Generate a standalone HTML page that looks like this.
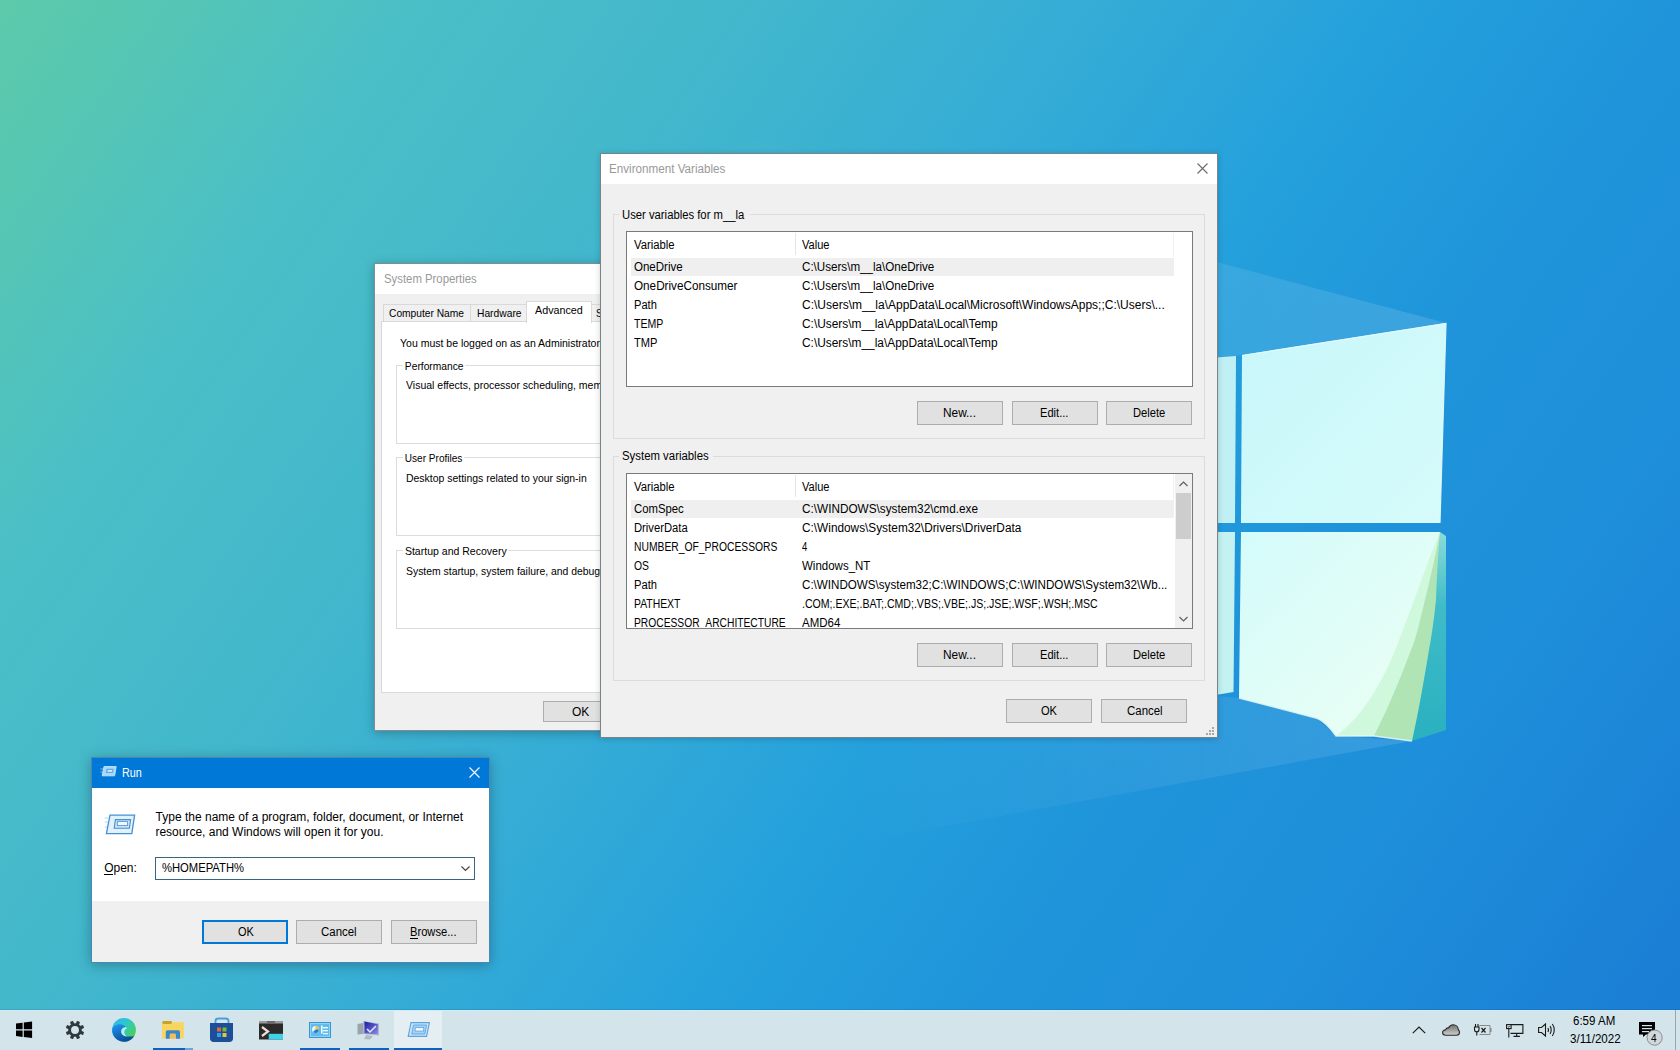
<!DOCTYPE html>
<html><head><meta charset="utf-8">
<style>
*{margin:0;padding:0;box-sizing:border-box}
html,body{width:1680px;height:1050px;overflow:hidden}
body{position:relative;font-family:"Liberation Sans",sans-serif;font-size:12px;color:#000;background:#2a9fd6}
.a{position:absolute}
.t{position:absolute;white-space:nowrap;transform-origin:0 0}
svg{position:absolute;overflow:visible}
</style></head><body>

<svg style="left:0;top:0" width="1680" height="1050" viewBox="0 0 1680 1050">
<defs>
<linearGradient id="bg" x1="0" y1="0" x2="1620.8" y2="1134.6" gradientUnits="userSpaceOnUse">
<stop offset="0" stop-color="#5ccaaa"/>
<stop offset="0.072" stop-color="#55c6b4"/>
<stop offset="0.166" stop-color="#4bbfc6"/>
<stop offset="0.238" stop-color="#47bbc9"/>
<stop offset="0.31" stop-color="#42b7cc"/>
<stop offset="0.455" stop-color="#35acd6"/>
<stop offset="0.58" stop-color="#24a0dc"/>
<stop offset="0.70" stop-color="#1f94da"/>
<stop offset="0.81" stop-color="#1e8fda"/>
<stop offset="1" stop-color="#1a7cd4"/>
</linearGradient>
<radialGradient id="tl" cx="0" cy="0" r="10"><stop offset="0" stop-color="#000" stop-opacity="0"/></radialGradient>
<linearGradient id="b1" x1="1446" y1="323" x2="700" y2="250" gradientUnits="userSpaceOnUse">
<stop offset="0" stop-color="#fff" stop-opacity="0.13"/>
<stop offset="1" stop-color="#fff" stop-opacity="0"/>
</linearGradient>
<linearGradient id="b2" x1="1412" y1="740" x2="850" y2="800" gradientUnits="userSpaceOnUse">
<stop offset="0" stop-color="#fff" stop-opacity="0.11"/>
<stop offset="1" stop-color="#fff" stop-opacity="0"/>
</linearGradient>
</defs>
<rect width="1680" height="1050" fill="url(#bg)"/>
<rect width="1680" height="1050" fill="url(#tl)"/>
<polygon points="1446,323 1242,355 600,456 600,98" fill="url(#b1)"/>
<polygon points="1412,741 1336,736 1316,718 1239,698 1217,696 600,700 600,889" fill="url(#b2)"/>
<!-- panes -->
<defs>
<linearGradient id="p1" x1="1242" y1="330" x2="1440" y2="523" gradientUnits="userSpaceOnUse"><stop offset="0" stop-color="#c8f7fb"/><stop offset="1" stop-color="#d6fbfa"/></linearGradient>
<linearGradient id="p2" x1="1242" y1="532" x2="1420" y2="720" gradientUnits="userSpaceOnUse"><stop offset="0" stop-color="#d4fbfb"/><stop offset="1" stop-color="#eafff4"/></linearGradient>
<linearGradient id="tl2" x1="0" y1="532" x2="0" y2="740" gradientUnits="userSpaceOnUse"><stop offset="0" stop-color="#8adcd8"/><stop offset="0.35" stop-color="#40bcc8"/><stop offset="1" stop-color="#2ab0c0"/></linearGradient>
</defs>
<polygon points="1210,358 1236,356 1235,523 1210,523" fill="#c0f0f4"/>
<polygon points="1242,355 1446,323 1440,523 1241,523" fill="url(#p1)"/>
<path d="M1242,355.5 L1446,323.5 L1440,523" fill="none" stroke="#e6fbfd" stroke-width="1.2" opacity="0.9"/>
<polygon points="1210,532 1235,532 1233.5,692 1210,696" fill="#c4f2f2"/>
<path d="M1440,532 L1446,536 L1446,730 L1412,741 L1405,650 Z" fill="url(#tl2)"/>
<path d="M1440,532 C1439,545 1437,570 1436,600 C1434,620 1431,640 1429,650 C1424,680 1418,715 1412,741 L1374,736 L1390,600 Z" fill="#b0e4b4"/>
<path d="M1440,532 C1438,545 1430,580 1425,600 C1420,620 1416,640 1411,650 C1396,690 1386,712 1374,736 L1336,736 L1380,600 Z" fill="#d0f8dc"/>
<path d="M1241,532 L1440,532 C1428,560 1412,608 1396,648 C1380,688 1360,718 1336,736 C1330,728 1324,721 1316,718 L1239,698 Z" fill="url(#p2)"/>
<path d="M1239,698 L1316,718 C1324,721 1330,728 1336,736 L1374,736 L1412,741" fill="none" stroke="#e8f6fa" stroke-width="1.3" opacity="0.85"/>
</svg>

<div class="a" style="left:0;top:0;width:600px;height:1050px;overflow:hidden"><div class="a" style="left:374px;top:263px;width:247px;height:468px;background:#f0f0f0;border:1px solid rgba(40,60,70,0.55);box-shadow:0 2px 10px rgba(0,0,0,0.25);"></div><div class="a" style="left:375px;top:264px;width:245px;height:30px;background:#fff;"></div><div class="t" style="left:384.0px;top:272px;font-size:12px;line-height:14px;color:#999;transform:scaleX(0.9459);">System Properties</div><div class="a" style="left:383px;top:304px;width:88px;height:18px;background:#f0f0f0;border:1px solid #d9d9d9;"></div><div class="a" style="left:470px;top:304px;width:58px;height:18px;background:#f0f0f0;border:1px solid #d9d9d9;"></div><div class="a" style="left:381px;top:321px;width:240px;height:372px;background:#fff;border:1px solid #d9d9d9;"></div><div class="a" style="left:526px;top:301px;width:66px;height:22px;background:#fff;border:1px solid #d9d9d9;border-bottom:none;"></div><div class="a" style="left:591px;top:304px;width:30px;height:18px;background:#f0f0f0;border:1px solid #d9d9d9;"></div><div class="t" style="left:389.0px;top:307px;font-size:11px;line-height:13px;transform:scaleX(0.9296);">Computer Name</div><div class="t" style="left:477.0px;top:307px;font-size:11px;line-height:13px;transform:scaleX(0.9333);">Hardware</div><div class="t" style="left:535.0px;top:304px;font-size:11px;line-height:13px;transform:scaleX(0.9776);">Advanced</div><div class="t" style="left:596.0px;top:307px;font-size:11px;line-height:13px;transform:scaleX(0.8571);">S</div><div class="t" style="left:400.3px;top:337px;font-size:11px;line-height:13px;transform:scaleX(0.9552);">You must be logged on as an Administrator</div><div class="a" style="left:396px;top:365px;width:245px;height:79px;border:1px solid #dcdcdc;"></div><div class="t" style="left:405.0px;top:360px;font-size:11px;line-height:13px;transform:scaleX(0.9302);background:#fff;padding:0 2px;margin-left:-2px;">Performance</div><div class="t" style="left:406.2px;top:379px;font-size:11px;line-height:13px;transform:scaleX(0.954);">Visual effects, processor scheduling, memory usage</div><div class="a" style="left:396px;top:457px;width:245px;height:79px;border:1px solid #dcdcdc;"></div><div class="t" style="left:405.0px;top:452px;font-size:11px;line-height:13px;transform:scaleX(0.9143);background:#fff;padding:0 2px;margin-left:-2px;">User Profiles</div><div class="t" style="left:406.0px;top:472px;font-size:11px;line-height:13px;transform:scaleX(0.9505);">Desktop settings related to your sign-in</div><div class="a" style="left:396px;top:550px;width:245px;height:79px;border:1px solid #dcdcdc;"></div><div class="t" style="left:405.0px;top:545px;font-size:11px;line-height:13px;transform:scaleX(0.9570);background:#fff;padding:0 2px;margin-left:-2px;">Startup and Recovery</div><div class="t" style="left:406.4px;top:565px;font-size:11px;line-height:13px;transform:scaleX(0.945);">System startup, system failure, and debugging information</div><div class="a" style="left:543px;top:701px;width:98px;height:21px;background:#e1e1e1;border:1px solid #adadad;"></div><div class="t" style="left:572.0px;top:705px;font-size:12px;line-height:14px;">OK</div></div>
<div class="a" style="left:600px;top:153px;width:618px;height:585px;background:#f0f0f0;border:1px solid rgba(40,60,70,0.6);box-shadow:0 1px 6px rgba(0,0,0,0.18);"></div><div class="a" style="left:601px;top:154px;width:616px;height:30px;background:#fff;"></div><div class="t" style="left:609.0px;top:162px;font-size:12px;line-height:14px;color:#999;transform:scaleX(0.9708);">Environment Variables</div><svg style="left:1197px;top:163px" width="11" height="11"><path d="M0.5,0.5 L10.5,10.5 M10.5,0.5 L0.5,10.5" stroke="#6b6b6b" stroke-width="1.1"/></svg><div class="a" style="left:613px;top:214px;width:592px;height:225px;border:1px solid #dcdcdc;"></div><div class="a" style="left:619px;top:206px;width:131px;height:17px;background:#f0f0f0;"></div><div class="t" style="left:622.0px;top:208px;font-size:12px;line-height:14px;transform:scaleX(0.9400);">User variables for m__la</div><div class="a" style="left:626px;top:231px;width:567px;height:156px;background:#fff;border:1px solid #7a7a7a;"></div><div class="a" style="left:1173px;top:233px;width:1px;height:24px;background:#f0f0f0;"></div><div class="a" style="left:795px;top:233px;width:1px;height:22px;background:#e5e5e5;"></div><div class="a" style="left:631px;top:258px;width:543px;height:18px;background:#efefef;"></div><div class="t" style="left:634.0px;top:238px;font-size:12px;line-height:14px;transform:scaleX(0.9419);">Variable</div><div class="t" style="left:802.0px;top:238px;font-size:12px;line-height:14px;transform:scaleX(0.9200);">Value</div><div class="t" style="left:634.0px;top:260px;font-size:12px;line-height:14px;transform:scaleX(0.9588);">OneDrive</div><div class="t" style="left:802.0px;top:260px;font-size:12px;line-height:14px;transform:scaleX(0.9679);">C:\Users\m__la\OneDrive</div><div class="t" style="left:634.0px;top:279px;font-size:12px;line-height:14px;transform:scaleX(0.9755);">OneDriveConsumer</div><div class="t" style="left:802.0px;top:279px;font-size:12px;line-height:14px;transform:scaleX(0.9679);">C:\Users\m__la\OneDrive</div><div class="t" style="left:634.0px;top:298px;font-size:12px;line-height:14px;transform:scaleX(0.9240);">Path</div><div class="t" style="left:802.0px;top:298px;font-size:12px;line-height:14px;">C:\Users\m__la\AppData\Local\Microsoft\WindowsApps;;C:\Users\...</div><div class="t" style="left:634.0px;top:317px;font-size:12px;line-height:14px;transform:scaleX(0.8788);">TEMP</div><div class="t" style="left:802.0px;top:317px;font-size:12px;line-height:14px;transform:scaleX(0.9909);">C:\Users\m__la\AppData\Local\Temp</div><div class="t" style="left:634.0px;top:336px;font-size:12px;line-height:14px;transform:scaleX(0.9240);">TMP</div><div class="t" style="left:802.0px;top:336px;font-size:12px;line-height:14px;transform:scaleX(0.9909);">C:\Users\m__la\AppData\Local\Temp</div><div class="a" style="left:917px;top:401px;width:86px;height:24px;background:#e1e1e1;border:1px solid #adadad;"></div><div class="t" style="left:943.4px;top:406px;font-size:12px;line-height:14px;transform:scaleX(0.9879);">New...</div><div class="a" style="left:1012px;top:401px;width:86px;height:24px;background:#e1e1e1;border:1px solid #adadad;"></div><div class="t" style="left:1040.3px;top:406px;font-size:12px;line-height:14px;transform:scaleX(0.9258);">Edit...</div><div class="a" style="left:1106px;top:401px;width:86px;height:24px;background:#e1e1e1;border:1px solid #adadad;"></div><div class="t" style="left:1132.6px;top:406px;font-size:12px;line-height:14px;transform:scaleX(0.9314);">Delete</div><div class="a" style="left:613px;top:456px;width:592px;height:225px;border:1px solid #dcdcdc;"></div><div class="a" style="left:619px;top:448px;width:94px;height:17px;background:#f0f0f0;"></div><div class="t" style="left:622.0px;top:449px;font-size:12px;line-height:14px;transform:scaleX(0.9484);">System variables</div><div class="a" style="left:626px;top:473px;width:567px;height:156px;background:#fff;border:1px solid #7a7a7a;"></div><div class="a" style="left:627px;top:474px;width:565px;height:154px;overflow:hidden"><div class="a" style="left:-627px;top:-474px;width:1680px;height:1050px"><div class="a" style="left:795px;top:475px;width:1px;height:22px;background:#e5e5e5;"></div><div class="a" style="left:631px;top:500px;width:543px;height:18px;background:#efefef;"></div><div class="a" style="left:1173px;top:475px;width:1px;height:24px;background:#f0f0f0;"></div><div class="t" style="left:634.0px;top:480px;font-size:12px;line-height:14px;transform:scaleX(0.9419);">Variable</div><div class="t" style="left:802.0px;top:480px;font-size:12px;line-height:14px;transform:scaleX(0.9200);">Value</div><div class="t" style="left:634.0px;top:502px;font-size:12px;line-height:14px;transform:scaleX(0.9434);">ComSpec</div><div class="t" style="left:802.0px;top:502px;font-size:12px;line-height:14px;transform:scaleX(0.9811);">C:\WINDOWS\system32\cmd.exe</div><div class="t" style="left:634.0px;top:521px;font-size:12px;line-height:14px;transform:scaleX(0.9362);">DriverData</div><div class="t" style="left:802.0px;top:521px;font-size:12px;line-height:14px;transform:scaleX(0.9848);">C:\Windows\System32\Drivers\DriverData</div><div class="t" style="left:634.0px;top:540px;font-size:12px;line-height:14px;transform:scaleX(0.8605);">NUMBER_OF_PROCESSORS</div><div class="t" style="left:802.0px;top:540px;font-size:12px;line-height:14px;transform:scaleX(0.7857);">4</div><div class="t" style="left:634.0px;top:559px;font-size:12px;line-height:14px;transform:scaleX(0.8647);">OS</div><div class="t" style="left:802.0px;top:559px;font-size:12px;line-height:14px;transform:scaleX(0.9583);">Windows_NT</div><div class="t" style="left:634.0px;top:578px;font-size:12px;line-height:14px;transform:scaleX(0.9320);">Path</div><div class="t" style="left:802.0px;top:578px;font-size:12px;line-height:14px;transform:scaleX(0.9682);">C:\WINDOWS\system32;C:\WINDOWS;C:\WINDOWS\System32\Wb...</div><div class="t" style="left:634.0px;top:597px;font-size:12px;line-height:14px;transform:scaleX(0.8648);">PATHEXT</div><div class="t" style="left:802.0px;top:597px;font-size:12px;line-height:14px;transform:scaleX(0.8804);">.COM;.EXE;.BAT;.CMD;.VBS;.VBE;.JS;.JSE;.WSF;.WSH;.MSC</div><div class="t" style="left:634.0px;top:616px;font-size:12px;line-height:14px;transform:scaleX(0.8554);">PROCESSOR_ARCHITECTURE</div><div class="t" style="left:802.0px;top:616px;font-size:12px;line-height:14px;transform:scaleX(0.9575);">AMD64</div><div class="a" style="left:1175px;top:474px;width:17px;height:154px;background:#f0f0f0;"></div><div class="a" style="left:1176px;top:493px;width:15px;height:46px;background:#cdcdcd;"></div><svg style="left:1176px;top:478px" width="15" height="12"><path d="M3.5,8 L7.5,4 L11.5,8" fill="none" stroke="#606060" stroke-width="1.2"/></svg><svg style="left:1176px;top:613px" width="15" height="12"><path d="M3.5,4 L7.5,8 L11.5,4" fill="none" stroke="#606060" stroke-width="1.2"/></svg></div></div><div class="a" style="left:917px;top:643px;width:86px;height:24px;background:#e1e1e1;border:1px solid #adadad;"></div><div class="t" style="left:943.4px;top:648px;font-size:12px;line-height:14px;transform:scaleX(0.9879);">New...</div><div class="a" style="left:1012px;top:643px;width:86px;height:24px;background:#e1e1e1;border:1px solid #adadad;"></div><div class="t" style="left:1040.3px;top:648px;font-size:12px;line-height:14px;transform:scaleX(0.9258);">Edit...</div><div class="a" style="left:1106px;top:643px;width:86px;height:24px;background:#e1e1e1;border:1px solid #adadad;"></div><div class="t" style="left:1132.6px;top:648px;font-size:12px;line-height:14px;transform:scaleX(0.9314);">Delete</div><div class="a" style="left:1006px;top:699px;width:86px;height:24px;background:#e1e1e1;border:1px solid #adadad;"></div><div class="t" style="left:1041.0px;top:704px;font-size:12px;line-height:14px;transform:scaleX(0.9235);">OK</div><div class="a" style="left:1101px;top:699px;width:86px;height:24px;background:#e1e1e1;border:1px solid #adadad;"></div><div class="t" style="left:1126.7px;top:704px;font-size:12px;line-height:14px;transform:scaleX(0.9541);">Cancel</div><svg style="left:1206px;top:727px" width="9" height="9" fill="#a8a8a8"><rect x="6" y="0" width="2" height="2"/><rect x="3" y="3" width="2" height="2"/><rect x="6" y="3" width="2" height="2"/><rect x="0" y="6" width="2" height="2"/><rect x="3" y="6" width="2" height="2"/><rect x="6" y="6" width="2" height="2"/></svg>
<div class="a" style="left:91px;top:757px;width:399px;height:206px;background:#f0f0f0;border:1px solid rgba(0,90,160,0.7);box-shadow:0 2px 12px rgba(0,0,0,0.28);"></div><div class="a" style="left:92px;top:758px;width:397px;height:30px;background:#0078d7;"></div><div class="a" style="left:92px;top:788px;width:397px;height:113px;background:#fff;"></div><svg style="left:100px;top:766px" width="17" height="11" viewBox="0 0 17 11"><path d="M0.5,3 L3,3 M0.5,6 L2.5,6" stroke="#9fd0f6" stroke-width="0.8"/><path d="M4,0.6 L16.2,0.6 L14.6,9.8 L2.2,9.8 Z" fill="#a9d8fa" stroke="#c8e8fc" stroke-width="0.9"/><path d="M6.5,2.8 L13.6,2.8 L13,7 L5.8,7 Z" fill="#5aaaf0"/><rect x="7.6" y="4" width="4.6" height="1.8" fill="#d8eefc"/></svg>
<div class="t" style="left:121.6px;top:766px;font-size:12px;line-height:14px;color:#fff;transform:scaleX(0.9000);">Run</div><svg style="left:469px;top:767px" width="11" height="11"><path d="M0.5,0.5 L10.5,10.5 M10.5,0.5 L0.5,10.5" stroke="#fff" stroke-width="1.1"/></svg><svg style="left:104px;top:813px" width="32" height="23" viewBox="0 0 32 23"><path d="M0.7,5 L4.2,5 M0.7,9 L3.7,9 M0.7,14 L3.2,14" stroke="#a8d0ee" stroke-width="0.9"/><path d="M6,2.2 L30.6,2.2 L27.8,20.6 L2.4,20.6 Z" fill="#e2f2fc" stroke="#4a8fd0" stroke-width="1.3"/><path d="M11.4,6.6 L26.6,6.6 L25.4,15.2 L10.2,15.2 Z" fill="#c4e3f8" stroke="#4a8fd0" stroke-width="1.1"/><rect x="13.3" y="8.6" width="10.2" height="4" fill="#f2f9fe" stroke="#4a8fd0" stroke-width="0.8"/></svg>
<div class="t" style="left:155.6px;top:810px;font-size:12px;line-height:14px;">Type the name of a program, folder, document, or Internet</div><div class="t" style="left:155.4px;top:825px;font-size:12px;line-height:14px;">resource, and Windows will open it for you.</div><div class="t" style="left:104.2px;top:861px;font-size:12px;line-height:14px;">Open:</div><div class="a" style="left:104px;top:874px;width:9px;height:1px;background:#000;"></div><div class="a" style="left:155px;top:857px;width:320px;height:23px;background:#fff;border:1px solid #3a6580;"></div><div class="t" style="left:161.8px;top:861px;font-size:12px;line-height:14px;transform:scaleX(0.9364);">%HOMEPATH%</div><svg style="left:461px;top:866px" width="10" height="6"><path d="M0.5,0.5 L4.5,4.5 L8.5,0.5" fill="none" stroke="#404040" stroke-width="1.1"/></svg><div class="a" style="left:202px;top:920px;width:86px;height:24px;background:#e1e1e1;border:2px solid #0078d7;"></div><div class="t" style="left:237.6px;top:925px;font-size:12px;line-height:14px;transform:scaleX(0.9118);">OK</div><div class="a" style="left:296px;top:920px;width:86px;height:24px;background:#e1e1e1;border:1px solid #adadad;"></div><div class="t" style="left:321.4px;top:925px;font-size:12px;line-height:14px;transform:scaleX(0.9541);">Cancel</div><div class="a" style="left:391px;top:920px;width:86px;height:24px;background:#e1e1e1;border:1px solid #adadad;"></div><div class="t" style="left:410.2px;top:925px;font-size:12px;line-height:14px;transform:scaleX(0.9300);">Browse...</div><div class="a" style="left:410px;top:938px;width:8px;height:1px;background:#000;"></div>
<div class="a" style="left:0;top:1010px;width:1680px;height:40px;background:#d3e5eb"></div>
<div class="a" style="left:0;top:1009px;width:1680px;height:1px;background:rgba(0,40,80,0.12)"></div>
<div class="a" style="left:0;top:1010px;width:1680px;height:1px;background:#cdeef8"></div>
<div class="a" style="left:394px;top:1011px;width:48px;height:39px;background:#e4eef3"></div>
<div class="a" style="left:153px;top:1048px;width:32px;height:2px;background:#0a64c0"></div>
<div class="a" style="left:185px;top:1048px;width:8px;height:2px;background:#6aa6dc"></div>
<div class="a" style="left:300px;top:1048px;width:40px;height:2px;background:#0a64c0"></div>
<div class="a" style="left:349px;top:1048px;width:40px;height:2px;background:#0a64c0"></div>
<div class="a" style="left:394px;top:1048px;width:48px;height:2px;background:#0a64c0"></div>
<!-- start -->
<svg style="left:16px;top:1021px" width="17" height="18" viewBox="0 0 17 18"><path d="M0,2.6 L6.6,1.7 L6.6,8.2 L0,8.2 Z M7.8,1.5 L16.1,0.5 L16.1,8.2 L7.8,8.2 Z M0,9.5 L6.6,9.5 L6.6,15.9 L0,15.1 Z M7.8,9.5 L16.1,9.5 L16.1,17 L7.8,16.1 Z" fill="#000"/></svg>
<!-- settings gear -->
<svg style="left:64.6px;top:1019.9px" width="20" height="20" viewBox="-10 -10 20 20"><g fill="#2f3a3e"><rect x="-1.7" y="-9.3" width="3.4" height="4" rx="0.8" transform="rotate(22.5)"/><rect x="-1.7" y="-9.3" width="3.4" height="4" rx="0.8" transform="rotate(67.5)"/><rect x="-1.7" y="-9.3" width="3.4" height="4" rx="0.8" transform="rotate(112.5)"/><rect x="-1.7" y="-9.3" width="3.4" height="4" rx="0.8" transform="rotate(157.5)"/><rect x="-1.7" y="-9.3" width="3.4" height="4" rx="0.8" transform="rotate(202.5)"/><rect x="-1.7" y="-9.3" width="3.4" height="4" rx="0.8" transform="rotate(247.5)"/><rect x="-1.7" y="-9.3" width="3.4" height="4" rx="0.8" transform="rotate(292.5)"/><rect x="-1.7" y="-9.3" width="3.4" height="4" rx="0.8" transform="rotate(337.5)"/></g><circle cx="0" cy="0" r="5.4" fill="none" stroke="#2f3a3e" stroke-width="2.9"/></svg>
<!-- edge -->
<svg style="left:108px;top:1014px" width="32" height="32" viewBox="0 0 32 32">
<defs><linearGradient id="eg1" x1="0.1" y1="0.1" x2="0.9" y2="0.7"><stop offset="0" stop-color="#2fb8ee"/><stop offset="0.5" stop-color="#2ec8c8"/><stop offset="1" stop-color="#48d05a"/></linearGradient>
<linearGradient id="eg2" x1="0" y1="0.2" x2="0.4" y2="1"><stop offset="0" stop-color="#1e8ce6"/><stop offset="1" stop-color="#0b4f9c"/></linearGradient></defs>
<circle cx="16" cy="15.9" r="11.9" fill="url(#eg1)"/>
<path d="M4.1,16 C4.4,12.2 8.6,10 12.4,10.2 C15.3,10.4 17.4,12 17.6,13.3 C15,13.3 13.2,15.3 13.2,17.4 C13.2,20.6 16.6,22.6 20.4,22.6 C22.6,22.6 24.5,22.1 26.1,21.9 C24,25.5 20.3,27.8 16,27.8 C9.4,27.8 4.1,22.5 4.1,16 Z" fill="url(#eg2)"/>
<path d="M17.6,13.3 C15,13.3 13.2,15.3 13.2,17.4 C13.2,20.2 15.8,22 18.8,22.4 C16.8,21 16,19.5 16.3,17.6 C16.6,15.6 18.4,14.4 19.2,14.6 C18.8,13.8 18.3,13.4 17.6,13.3 Z" fill="#b8eef6"/>
</svg>
<!-- explorer -->
<svg style="left:162px;top:1021px" width="22" height="18" viewBox="0 0 22 18">
<rect x="0" y="1.2" width="21.8" height="16.2" fill="#f8d55e"/>
<rect x="0.3" y="0" width="9.7" height="2.9" rx="1.3" fill="#c9a226"/>
<rect x="7.7" y="12.6" width="6.3" height="5.1" fill="#efbd5c"/>
<path d="M3.8,17.7 L3.8,10.9 Q3.8,9.3 5.4,9.3 L16.4,9.3 Q18,9.3 18,10.9 L18,17.7 L14,17.7 L14,14 Q14,12.6 12.6,12.6 L9.1,12.6 Q7.7,12.6 7.7,14 L7.7,17.7 Z" fill="#3a86c6"/>
</svg>
<!-- store -->
<svg style="left:210px;top:1018px" width="24" height="25" viewBox="0 0 24 25">
<path d="M5.5,6 L5.5,3 C5.5,1.3 6.8,0.5 8.5,0.5 L15.5,0.5 C17.2,0.5 18.5,1.3 18.5,3 L18.5,6" fill="none" stroke="#4a9ee0" stroke-width="1.8"/>
<path d="M0,5 L23,5 L23,20.5 C23,22.5 21.5,24 19.5,24 L3.5,24 C1.5,24 0,22.5 0,20.5 Z" fill="#1d4f98"/>
<rect x="7" y="9.5" width="4" height="4" fill="#e0683a"/><rect x="12.5" y="9.5" width="4" height="4" fill="#7ab83a"/>
<rect x="7" y="15" width="4" height="4" fill="#2fa0e8"/><rect x="12.5" y="15" width="4" height="4" fill="#e8c63a"/>
</svg>
<!-- terminal -->
<svg style="left:259px;top:1021px" width="24" height="19" viewBox="0 0 24 19">
<rect x="0" y="0" width="24" height="18.5" fill="#2c2a28"/>
<rect x="0" y="0" width="24" height="2.5" fill="#9a9a9a"/>
<rect x="8" y="0" width="8" height="2.5" fill="#6a6a6a"/>
<path d="M3,6 L9,10.5 L3,15" fill="none" stroke="#e8e0d8" stroke-width="2.2"/>
<rect x="9.7" y="12.8" width="14.3" height="5.7" fill="#3fd0ea"/>
</svg>
<!-- control panel -->
<svg style="left:309px;top:1022px" width="22" height="16" viewBox="0 0 22 16">
<rect x="0.5" y="0.5" width="21" height="15" fill="#8fd4f4" stroke="#3b93d4" stroke-width="1"/>
<rect x="2" y="2" width="18" height="12" fill="#5fbdee"/>
<circle cx="6.5" cy="7.5" r="3.5" fill="#e8f6fc"/><path d="M6.5,7.5 L6.5,4 A3.5,3.5 0 0 1 10,7.5 Z" fill="#f0c040"/><path d="M6.5,7.5 L10,7.5 A3.5,3.5 0 0 1 4,10 Z" fill="#2a7cc8"/>
<rect x="12" y="3.5" width="1.5" height="8" fill="#fff"/><rect x="14" y="5" width="5" height="1.3" fill="#fff"/><rect x="14" y="8" width="5" height="1.3" fill="#fff"/><rect x="14" y="11" width="5" height="1.3" fill="#e8f6fc"/>
</svg>
<!-- system -->
<svg style="left:357px;top:1020px" width="24" height="20" viewBox="0 0 24 20">
<defs><linearGradient id="sg" x1="0" y1="0" x2="1" y2="1"><stop offset="0" stop-color="#1a1aa0"/><stop offset="1" stop-color="#8a8ae8"/></linearGradient></defs>
<path d="M0.5,4 L6,3 L6,14 L0.5,14.5 Z" fill="#9aa4ac"/>
<path d="M6,1 L22,3.5 L22,15.5 L6,14 Z" fill="#b0b8c8"/>
<path d="M7.5,1.5 L20.8,4.3 L20.8,14.3 L7.5,13.2 Z" fill="url(#sg)"/>
<path d="M10,9 L13,12 L19,6" fill="none" stroke="#e0e8ff" stroke-width="1.5"/>
<path d="M9,15 L16,16 L13,19.5 L7,19 Z" fill="#a0a8b0" opacity="0.7"/>
</svg>
<!-- run (taskbar) -->
<svg style="left:407px;top:1022px" width="23" height="15" viewBox="0 0 23 15">
<path d="M4,0.6 L22.4,0.6 L19.6,14.4 L1.2,14.4 Z" fill="#c9e4f8" stroke="#5aa5e0" stroke-width="1.1"/>
<path d="M6.5,3 L19.5,3 L17.8,12 L4.8,12 Z" fill="#a8d2f4" stroke="#5aa5e0" stroke-width="0.9"/>
<rect x="8.2" y="5.6" width="8.5" height="3.5" fill="#eef7fd" stroke="#5aa5e0" stroke-width="0.8"/>
</svg>
<!-- tray -->
<svg style="left:1412px;top:1026px" width="14" height="8" viewBox="0 0 14 8"><path d="M0.8,7.2 L7,1 L13.2,7.2" fill="none" stroke="#1a1a1a" stroke-width="1.2"/></svg>
<svg style="left:1442px;top:1024px" width="18" height="12" viewBox="0 0 18 12">
<defs><linearGradient id="cg" x1="0" y1="0" x2="0" y2="1"><stop offset="0" stop-color="#6e6e6e"/><stop offset="1" stop-color="#d0d0d0"/></linearGradient></defs>
<path d="M3.6,11.3 C1.8,11.3 0.6,10.1 0.6,8.6 C0.6,7 1.9,5.8 3.5,5.9 C4,4.5 5.2,3.8 6.5,3.9 C7.4,1.9 9.2,0.7 11.2,0.7 C14,0.7 16.2,2.9 16.3,5.7 C17.1,6.3 17.5,7.2 17.5,8.3 C17.5,10 16.2,11.3 14.5,11.3 Z" fill="url(#cg)" stroke="#2a2a2a" stroke-width="1.1"/>
</svg>
<svg style="left:1474px;top:1024px" width="18" height="12" viewBox="0 0 18 12">
<path d="M1.5,0 L1.5,3 M4,0 L4,3 M0.5,3 L5,3 L5,5.5 C5,7 4,7.8 2.8,7.8 C1.5,7.8 0.5,7 0.5,5.5 Z M2.8,7.8 L2.8,11.5" fill="none" stroke="#1a1a1a" stroke-width="1.1"/>
<path d="M5.5,1.5 L16,1.5 L16,10.5 L5.5,10.5" fill="none" stroke="#8a8a8a" stroke-width="1"/><rect x="16" y="4" width="1.5" height="4" fill="#8a8a8a"/>
<path d="M7.5,4 L11.5,8.5 M11.5,4 L7.5,8.5" stroke="#1a1a1a" stroke-width="1.2"/>
</svg>
<svg style="left:1506px;top:1024px" width="18" height="14" viewBox="0 0 18 14">
<path d="M4.5,0.6 L16.9,0.6 L16.9,9.4 L4.5,9.4 M10.7,9.4 L10.7,12 M7.5,12.4 L13.9,12.4" fill="none" stroke="#1a1a1a" stroke-width="1.1"/>
<rect x="0.6" y="0.6" width="4.5" height="4" fill="#d5e3eb" stroke="#1a1a1a" stroke-width="1.1"/>
<path d="M2.8,4.6 L2.8,13.4" stroke="#1a1a1a" stroke-width="1.1"/>
<path d="M1.8,2.5 L2.8,3.3 L3.8,1.8" fill="none" stroke="#1a1a1a" stroke-width="0.7"/>
</svg>
<svg style="left:1538px;top:1023px" width="18" height="14" viewBox="0 0 18 14">
<path d="M0.6,4.5 L3.5,4.5 L7.5,1 L7.5,13 L3.5,9.5 L0.6,9.5 Z" fill="none" stroke="#1a1a1a" stroke-width="1.1"/>
<path d="M9.8,5 C10.6,6 10.6,8 9.8,9" fill="none" stroke="#1a1a1a" stroke-width="1.1"/>
<path d="M12,3.2 C13.6,5.2 13.6,8.8 12,10.8" fill="none" stroke="#1a1a1a" stroke-width="1.1"/>
<path d="M14.3,1 C16.9,4.2 16.9,9.8 14.3,13" fill="none" stroke="#1a1a1a" stroke-width="1.1"/>
</svg>
<svg style="left:1639px;top:1022px" width="26" height="26" viewBox="0 0 26 26">
<path d="M0,0 L16,0 L16,12.5 L7,12.5 L4,15 L4,12.5 L0,12.5 Z" fill="#000"/>
<rect x="3" y="3" width="10" height="1.2" fill="#d5e3eb"/><rect x="3" y="6" width="10" height="1.2" fill="#d5e3eb"/><rect x="3" y="9" width="7" height="1.2" fill="#d5e3eb"/>
<circle cx="15.6" cy="15.6" r="7.6" fill="#d0d8de" stroke="#8a8a8a" stroke-width="1"/>
</svg>
<div class="a" style="left:1675px;top:1010px;width:1px;height:40px;background:#9aa6ae"></div>

<div class="t" style="left:1573.2px;top:1014px;font-size:12px;line-height:14px;transform:scaleX(0.9591);">6:59 AM</div>
<div class="t" style="left:1569.6px;top:1032px;font-size:12px;line-height:14px;transform:scaleX(0.9642);">3/11/2022</div>
<div class="t" style="left:1651.0px;top:1032px;font-size:11px;line-height:13px;transform:scaleX(0.9167);">4</div>
</body></html>
